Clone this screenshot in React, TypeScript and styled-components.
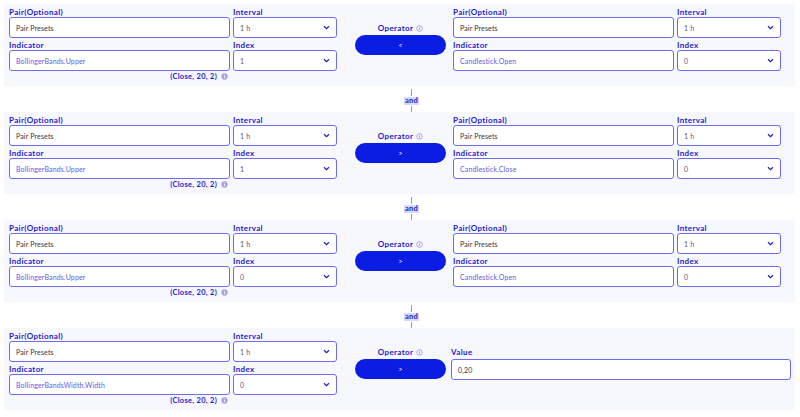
import React from "react";
import styled, { createGlobalStyle } from "styled-components";

const GlobalStyle = createGlobalStyle`
	html, body {
		margin: 0;
		padding: 0;
		background: #ffffff;
	}
	body {
		font-family: Lato, "Open Sans", sans-serif;
	}
	* {
		box-sizing: border-box;
	}
`;

const Page = styled("div")`
	padding: 4px 5px 0 4px;
	width: 800px;
`;

const Card = styled("div")`
	background: #f7f7fe;
	display: flex;
	align-items: flex-start;
	height: 82px;
	padding: 4px 4px 0 5px;
`;

const Group = styled("div")`
	display: grid;
	grid-template-columns: 221px 104px;
	column-gap: 3px;
	row-gap: 3px;
`;

const Field = styled("div")`
	display: flex;
	flex-direction: column;
`;

const Label = styled("div")`
	color: #1c1ccc;
	font-size: 8px;
	font-weight: 700;
	height: 8px;
	line-height: 8px;
	margin-bottom: 1px;
	letter-spacing: 0.35px;
`;

const Input = styled("div")<{ $tone?: "dark" | "blue" | "grey" }>`
	background: #ffffff;
	border: 1.5px solid #6c6cf2;
	border-radius: 3px;
	height: 21px;
	display: flex;
	align-items: center;
	justify-content: space-between;
	padding: 0 6px 0 6px;
	font-size: 7px;
	letter-spacing: 0.15px;
	color: ${({ $tone }): string =>
		$tone === "blue" ? "#5c5ce4" : $tone === "grey" ? "#5a5a78" : "#333340"};
`;

const Chevron = styled("svg")`
	width: 7px;
	height: 5px;
`;

const Params = styled("div")`
	display: flex;
	justify-content: flex-end;
	align-items: center;
	gap: 4px;
	height: 8px;
	margin-top: -2px;
	padding-right: 2px;
	color: #1c1ccc;
	font-size: 7.5px;
	font-weight: 700;
	letter-spacing: 0.3px;
`;

const OperatorCol = styled("div")`
	display: flex;
	flex-direction: column;
	align-items: center;
	width: 91px;
	margin: 16px 7px 0 18px;
`;

const OperatorLabel = styled("div")`
	display: flex;
	align-items: center;
	gap: 3px;
	color: #1c1ccc;
	font-size: 8px;
	font-weight: 700;
	letter-spacing: 0.35px;
	height: 8px;
	line-height: 8px;
	margin-bottom: 3px;
`;

const OperatorButton = styled("div")`
	background: #0b1de3;
	border-radius: 10px;
	color: #ffffff;
	font-size: 7px;
	height: 20px;
	width: 91px;
	display: flex;
	align-items: center;
	justify-content: center;
`;

const RightGroup = styled(Group)`
	margin-right: 12px;
`;

const ValueField = styled("div")`
	display: flex;
	flex-direction: column;
	flex: 1;
	margin: 16px 0 0 -2px;
	${Label} {
		margin-bottom: 3px;
	}
`;

const Connector = styled("div")`
	display: flex;
	flex-direction: column;
	align-items: center;
	height: 26px;
	padding: 3px 0 0 24px;
`;

const Line = styled("div")`
	width: 1px;
	height: 7px;
	background: #8f95ef;
`;

const AndPill = styled("div")`
	background: #d6d9f6;
	color: #1c1ccc;
	font-size: 7.5px;
	font-weight: 700;
	letter-spacing: 0.3px;
	line-height: 8px;
	padding: 0 1px;
	margin: 1px 0;
`;

const ChevronIcon = () => (
	<Chevron viewBox="0 0 7 5">
		<path d="M1 1.2 L3.5 3.6 L6 1.2" fill="none" stroke="#1c1ccc" strokeWidth="1.2" />
	</Chevron>
);

const InfoFilled = () => (
	<svg width="7" height="7" viewBox="0 0 8 8">
		<circle cx="4" cy="4" r="3.6" fill="#aaa2e4" />
		<rect x="3.5" y="3.4" width="1" height="2.6" fill="#f7f7fe" />
		<rect x="3.5" y="2" width="1" height="0.9" fill="#f7f7fe" />
	</svg>
);

const InfoOutline = () => (
	<svg width="7" height="7" viewBox="0 0 8 8">
		<circle cx="4" cy="4" r="3.2" fill="none" stroke="#9a8ae0" strokeWidth="0.9" />
		<rect x="3.55" y="3.5" width="0.9" height="2.3" fill="#9a8ae0" />
		<rect x="3.55" y="2.1" width="0.9" height="0.8" fill="#9a8ae0" />
	</svg>
);

interface SideProps {
	indicator: string;
	index: string;
	params?: boolean;
}

const Side = ({ indicator, index, params }: SideProps) => (
	<>
		<Field>
			<Label>Pair(Optional)</Label>
			<Input>Pair Presets</Input>
		</Field>
		<Field>
			<Label>Interval</Label>
			<Input $tone="grey">
				1 h
				<ChevronIcon />
			</Input>
		</Field>
		<Field>
			<Label>Indicator</Label>
			<Input $tone="blue">{indicator}</Input>
		</Field>
		<Field>
			<Label>Index</Label>
			<Input $tone="grey">
				{index}
				<ChevronIcon />
			</Input>
		</Field>
		{params ? (
			<Params>
				(Close, 20, 2)
				<InfoFilled />
			</Params>
		) : (
			<Params />
		)}
	</>
);

const Operator = ({ symbol }: { symbol: string }) => (
	<OperatorCol>
		<OperatorLabel>
			Operator
			<InfoOutline />
		</OperatorLabel>
		<OperatorButton>{symbol}</OperatorButton>
	</OperatorCol>
);

const And = () => (
	<Connector>
		<Line />
		<AndPill>and</AndPill>
		<Line />
	</Connector>
);

interface Condition {
	left: { indicator: string; index: string };
	operator: string;
	right?: { indicator: string; index: string };
	value?: string;
}

const conditions: Array<Condition> = [
	{
		left: { indicator: "BollingerBands.Upper", index: "1" },
		operator: "<",
		right: { indicator: "Candlestick.Open", index: "0" },
	},
	{
		left: { indicator: "BollingerBands.Upper", index: "1" },
		operator: ">",
		right: { indicator: "Candlestick.Close", index: "0" },
	},
	{
		left: { indicator: "BollingerBands.Upper", index: "0" },
		operator: ">",
		right: { indicator: "Candlestick.Open", index: "0" },
	},
	{
		left: { indicator: "BollingerBandsWidth.Width", index: "0" },
		operator: ">",
		value: "0,20",
	},
];

export default function App() {
	return (
		<>
			<GlobalStyle />
			<Page>
				{conditions.map((c, i) => (
					<React.Fragment key={i}>
						{i > 0 && <And />}
						<Card>
							<Group>
								<Side indicator={c.left.indicator} index={c.left.index} params />
							</Group>
							<Operator symbol={c.operator} />
							{c.right ? (
								<RightGroup>
									<Side indicator={c.right.indicator} index={c.right.index} />
								</RightGroup>
							) : (
								<ValueField>
									<Label>Value</Label>
									<Input>{c.value}</Input>
								</ValueField>
							)}
						</Card>
					</React.Fragment>
				))}
			</Page>
		</>
	);
}
